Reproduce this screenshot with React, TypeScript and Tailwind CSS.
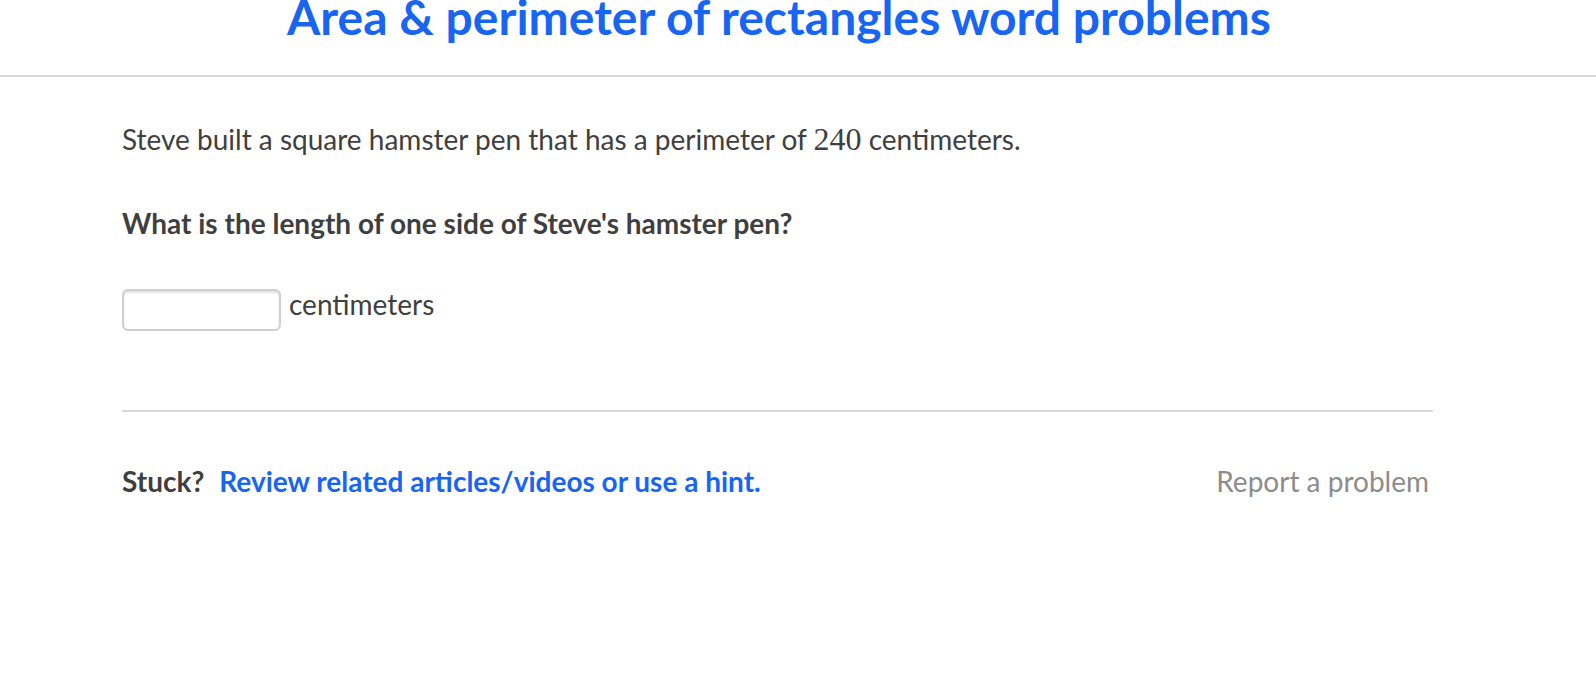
export default function App() {
  return (
    <div className="min-h-[682px] bg-white font-['Lato',sans-serif] text-[#3f3f3f]">
      <header className="flex justify-center border-b-2 border-[#d8d8d8] pb-[30px] pr-[38px]">
        <h1 className="-mt-[10.6px] text-[48px] leading-[56px] font-bold text-[#1865f2]">
          Area &amp; perimeter of rectangles word problems
        </h1>
      </header>

      <main className="pl-[122px] pr-[163px]">
        <p className="mt-[42px] text-[28px] leading-[40px]">
          Steve built a square hamster pen that has a perimeter of{" "}
          <span className="font-['Liberation_Serif',serif] text-[32px]">240</span> centimeters.
        </p>

        <p className="mt-[44px] text-[28px] leading-[40px] font-bold">
          What is the length of one side of Steve's hamster pen?
        </p>

        <div className="mt-[46px] flex items-start gap-2">
          <input
            type="text"
            className="h-[42px] w-[159px] rounded-md border-2 border-[#cfcfcf] bg-white px-2 text-[28px] shadow-[inset_0_2px_2px_rgba(0,0,0,0.12)] outline-none"
          />
          <span className="-mt-[5px] text-[28px] leading-[40px]">centimeters</span>
        </div>

        <div className="mt-[79px] border-t-2 border-[#d8d8d8]" />

        <footer className="mt-[49px] flex items-center justify-between pr-1 text-[28px] leading-[40px]">
          <div className="flex gap-[15px] font-bold">
            <span>Stuck?</span>
            <a href="#" className="text-[#1865f2]">
              Review related articles/videos or use a hint.
            </a>
          </div>
          <a href="#" className="text-[#8c8c8c]">
            Report a problem
          </a>
        </footer>
      </main>
    </div>
  );
}
